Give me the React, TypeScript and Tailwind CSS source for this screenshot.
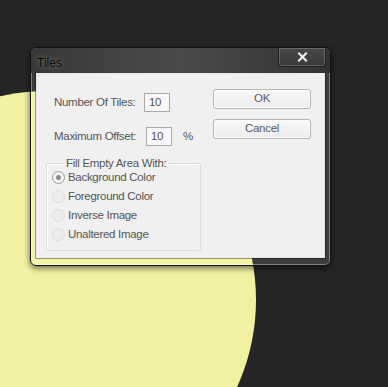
import React from "react";

function Radio({ checked, label }: { checked?: boolean; label: string }) {
  return (
    <div className="flex items-center h-[19px]">
      <div
        className={
          "w-[13px] h-[13px] rounded-full border flex items-center justify-center " +
          (checked ? "border-[#9a9a9a] bg-[#f4f4f4]" : "border-[#dedede] bg-[#ececec]")
        }
      >
        {checked && <div className="w-[5px] h-[5px] rounded-full bg-[#8a8a8a]" />}
      </div>
      <span className="ml-[3px] text-[#555] whitespace-nowrap">{label}</span>
    </div>
  );
}

function Btn({ label }: { label: string }) {
  return (
    <div className="w-[98px] h-[20px] rounded-[3px] border border-[#b4b4b4] bg-gradient-to-b from-[#f8f8f8] to-[#ececec] shadow-[inset_0_0_0_1px_#fcfcfc] flex items-center justify-center text-[#5a5a5a]">
      {label}
    </div>
  );
}

export default function App() {
  return (
    <div
      className="relative w-[388px] h-[387px] overflow-hidden bg-[#262626] text-[11.5px] tracking-[-0.3px]"
      style={{ fontFamily: '"Liberation Sans", Arial, sans-serif' }}
    >
      {/* yellow circle drawing */}
      <div className="absolute left-[-162px] top-[91px] w-[418px] h-[418px] rounded-full bg-[#f1f1a1]" />

      {/* window */}
      <div className="absolute left-[30px] top-[47px] w-[301px] h-[219px] rounded-[6px] border border-[#111] bg-white/10 shadow-[0_2px_6px_rgba(0,0,0,0.6),inset_0_0_0_1px_rgba(255,255,255,0.35)] flex flex-col">
        {/* title bar */}
        <div className="relative h-[25px] shrink-0 rounded-t-[5px] bg-gradient-to-r from-[#383838] via-[#4a4a4a] to-[#333] flex items-start">
          <span className="ml-[6px] mt-[6px] text-[#0a0a0a] text-[12px] tracking-normal [text-shadow:0_0_6px_rgba(255,255,255,0.45)]">
            Tiles
          </span>
          {/* close button */}
          <div className="absolute right-[4px] top-0 w-[48px] h-[19px] rounded-b-[3px] border border-[#1e1e1e] border-t-0 bg-gradient-to-b from-[#474747] to-[#3a3a3a] shadow-[inset_0_0_0_1px_rgba(255,255,255,0.2)] flex items-center justify-center">
            <svg width="11" height="10" viewBox="0 0 11 10">
              <path d="M2 1.5 L9 8.5 M9 1.5 L2 8.5" stroke="#f2f2f2" strokeWidth="2" strokeLinecap="square" />
            </svg>
          </div>
        </div>

        {/* client area */}
        <div className="mx-[5px] mb-[7px] flex-1 border border-[#e8e8e8] bg-[#f0f0f0] flex shadow-[0_0_0_1px_rgba(0,0,0,0.35)]">
          <div className="w-[176px] pl-[9px] pt-[19px] flex flex-col">
            <div className="pl-[8px] flex items-center h-[19px]">
              <span className="w-[90px] text-[#555] whitespace-nowrap">Number Of Tiles:</span>
              <div className="w-[26px] h-[19px] border border-[#a9a9a9] bg-[#f8f8f8] pl-[4px] flex items-center text-[#555]">10</div>
            </div>
            <div className="pl-[8px] mt-[15px] flex items-center h-[19px]">
              <span className="w-[92px] text-[#555] whitespace-nowrap">Maximum Offset:</span>
              <div className="w-[26px] h-[19px] border border-[#a9a9a9] bg-[#f8f8f8] pl-[4px] flex items-center text-[#555]">10</div>
              <span className="ml-[11px] text-[#555]">%</span>
            </div>
            <fieldset className="mt-[10px] w-[155px] h-[95px] border border-[#dcdcdc] rounded-[2px] shadow-[inset_1px_1px_0_#fff] pl-[5px]">
              <legend className="ml-[12px] px-[2px] text-[#555] leading-[14px] whitespace-nowrap">Fill Empty Area With:</legend>
              <div className="mt-[-2px] flex flex-col">
                <Radio checked label="Background Color" />
                <Radio label="Foreground Color" />
                <Radio label="Inverse Image" />
                <Radio label="Unaltered Image" />
              </div>
            </fieldset>
          </div>
          <div className="pt-[15px] flex flex-col gap-[10px]">
            <Btn label="OK" />
            <Btn label="Cancel" />
          </div>
        </div>
      </div>
    </div>
  );
}
